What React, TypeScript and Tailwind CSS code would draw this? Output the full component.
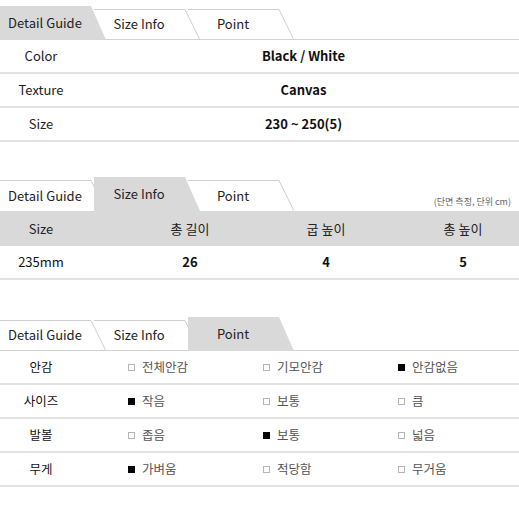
import React from 'react';

const TABS = ['Detail Guide', 'Size Info', 'Point'];
const FONT = "font-['Noto_Sans_CJK_KR','Noto_Sans',sans-serif]";

// tab strip with slanted tab shapes, active one filled grey
const TabBar: React.FC<{ active: number; line?: boolean; caption?: string }> = ({ active, line, caption }) => (
  <div className={`flex h-[34px] ${line ? 'border-b border-[#d2d2d2]' : ''}`}>
    {TABS.map((t, i) => (
      <div
        key={t}
        className={`relative w-[106px] h-full shrink-0 ${i > 0 ? '-ml-[12px]' : ''} ${i === active ? 'z-10' : 'z-0'}`}
      >
        <svg className="absolute inset-0" width="106" height="34" viewBox="0 0 106 34">
          {i === active ? (
            <polygon points="0,0 91,0 106,34 0,34" fill="#d9d9d9" />
          ) : (
            <polyline points="0,3.5 91,3.5 106,34" fill="none" stroke="#cfcfcf" strokeWidth="1" />
          )}
        </svg>
        <div className={`relative w-[90px] h-full flex items-center justify-center text-[13px] text-[#222] ${i === active ? '' : 'pt-[3px]'}`}>
          {t}
        </div>
      </div>
    ))}
    {caption && (
      <div className="ml-auto self-end pb-[3px] pr-[8px] text-[9px] text-[#666]">{caption}</div>
    )}
  </div>
);

const Box: React.FC<{ on?: boolean }> = ({ on }) => (
  <span className={`inline-block shrink-0 w-[7px] h-[7px] mr-[7px] ${on ? 'bg-black' : 'border border-[#b5b5b5]'}`} />
);

const detail = [
  ['Color', 'Black / White'],
  ['Texture', 'Canvas'],
  ['Size', '230 ~ 250(5)'],
];

const points: [string, [string, boolean][]][] = [
  ['안감', [['전체안감', false], ['기모안감', false], ['안감없음', true]]],
  ['사이즈', [['작음', true], ['보통', false], ['큼', false]]],
  ['발볼', [['좁음', false], ['보통', true], ['넓음', false]]],
  ['무게', [['가벼움', true], ['적당함', false], ['무거움', false]]],
];

export default function App() {
  return (
    <div className={`w-[519px] h-[519px] bg-white pt-[6px] ${FONT}`}>
      {/* DETAIL GUIDE */}
      <TabBar active={0} line />
      {detail.map(([k, v]) => (
        <div key={k} className="flex items-center h-[34px] border-b-2 border-[#e2e2e2]">
          <div className="w-[82px] shrink-0 text-center text-[13px] text-[#222]">{k}</div>
          <div className="flex-1 text-center text-[13px] font-bold text-[#111] pl-[6px]">{v}</div>
        </div>
      ))}

      {/* SIZE INFO */}
      <div className="mt-[35px]">
        <TabBar active={1} caption="(단면 측정, 단위 cm)" />
        <div className="flex items-center h-[35px] bg-[#d9d9d9] text-[13px] text-[#222]">
          <div className="w-[82px] shrink-0 text-center">Size</div>
          <div className="w-[120px] ml-[48px] text-center">총 길이</div>
          <div className="w-[112px] ml-[20px] text-center">굽 높이</div>
          <div className="w-[112px] ml-[25px] text-center">총 높이</div>
        </div>
        <div className="flex items-center h-[34px] border-b-2 border-[#e2e2e2] text-[13px] text-[#111]">
          <div className="w-[82px] shrink-0 text-center">235mm</div>
          <div className="w-[120px] ml-[48px] text-center font-bold">26</div>
          <div className="w-[112px] ml-[20px] text-center font-bold">4</div>
          <div className="w-[112px] ml-[25px] text-center font-bold">5</div>
        </div>
      </div>

      {/* POINT */}
      <div className="mt-[37px]">
        <TabBar active={2} line />
        {points.map(([k, opts]) => (
          <div key={k} className="flex items-center h-[34px] border-b-2 border-[#e2e2e2]">
            <div className="w-[82px] shrink-0 text-center text-[12.5px] text-[#111]">{k}</div>
            <div className="flex-1 grid grid-cols-[135px_135px_1fr] ml-[46px]">
              {opts.map(([o, on]) => (
                <div key={o} className="flex items-center text-[12.5px] text-[#555]">
                  <Box on={on} />
                  {o}
                </div>
              ))}
            </div>
          </div>
        ))}
      </div>
    </div>
  );
}
